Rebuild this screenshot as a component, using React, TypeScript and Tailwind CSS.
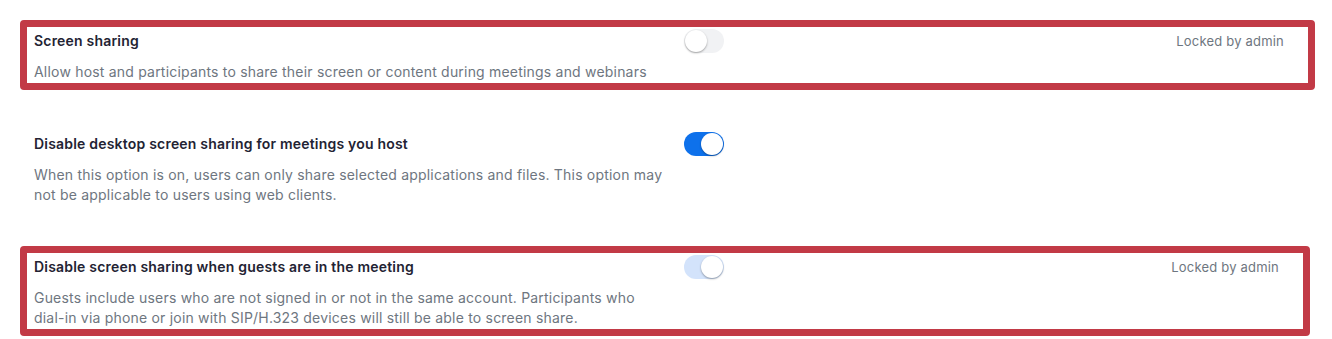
import type { ReactNode } from "react";

const Toggle = ({ state }: { state: "off" | "on" | "locked" }) => {
  const track =
    state === "on"
      ? "bg-[#0e71eb]"
      : state === "locked"
      ? "bg-[#d3e3fb]"
      : "bg-[#f1f2f4]";
  const knob = state === "off" ? "left-[1px]" : "right-[1px]";

  return (
    <div className={`relative h-[24px] w-[40px] shrink-0 rounded-full ${track}`}>
      <div
        className={`absolute top-[1px] h-[22px] w-[22px] rounded-full bg-white shadow-[0_1px_2px_rgba(0,0,0,0.35)] ${knob}`}
      />
    </div>
  );
};

type Row = {
  title: string;
  desc: ReactNode;
  state: "off" | "on" | "locked";
  locked: boolean;
  width: string;
};

const rows: Row[] = [
  {
    title: "Screen sharing",
    desc: "Allow host and participants to share their screen or content during meetings and webinars",
    state: "off",
    locked: true,
    width: "w-[1295px]",
  },
  {
    title: "Disable desktop screen sharing for meetings you host",
    desc: "When this option is on, users can only share selected applications and files. This option may not be applicable to users using web clients.",
    state: "on",
    locked: false,
    width: "w-[1295px]",
  },
  {
    title: "Disable screen sharing when guests are in the meeting",
    desc: (
      <>
        Guests include users who are not signed in or not in the same account. Participants who{" "}
        <span className="whitespace-nowrap">dial-in</span> via phone or join with SIP/H.323 devices will still be able to screen share.
      </>
    ),
    state: "locked",
    locked: true,
    width: "w-[1290px]",
  },
];

const App = () => {
  return (
    <div className="min-h-screen bg-white pl-[20px] pt-[20px] font-['Inter',sans-serif] tracking-[0.2px]">
      <div className="flex flex-col gap-[33px]">
        {rows.map((row) => (
          <div
            key={row.title}
            className={`rounded-[4px] border-[7px] ${row.width} ${
              row.locked ? "border-[#c23a46]" : "border-transparent"
            }`}
          >
            <div className="flex items-start pb-[1px] pl-[7px] pr-[24px] pt-[2px]">
              <div className="w-[640px] shrink-0">
                <div className="text-[14px] font-semibold leading-[24px] text-[#232333]">
                  {row.title}
                </div>
                <p className="mt-[9px] text-[14px] leading-[20px] text-[#6e7680]">
                  {row.desc}
                </p>
              </div>
              <div className="ml-[10px]">
                <Toggle state={row.state} />
              </div>
              <div className="flex-1" />
              {row.locked && (
                <span className="text-[13px] leading-[24px] text-[#6e7680]">
                  Locked by admin
                </span>
              )}
            </div>
          </div>
        ))}
      </div>
    </div>
  );
};

export default App;
